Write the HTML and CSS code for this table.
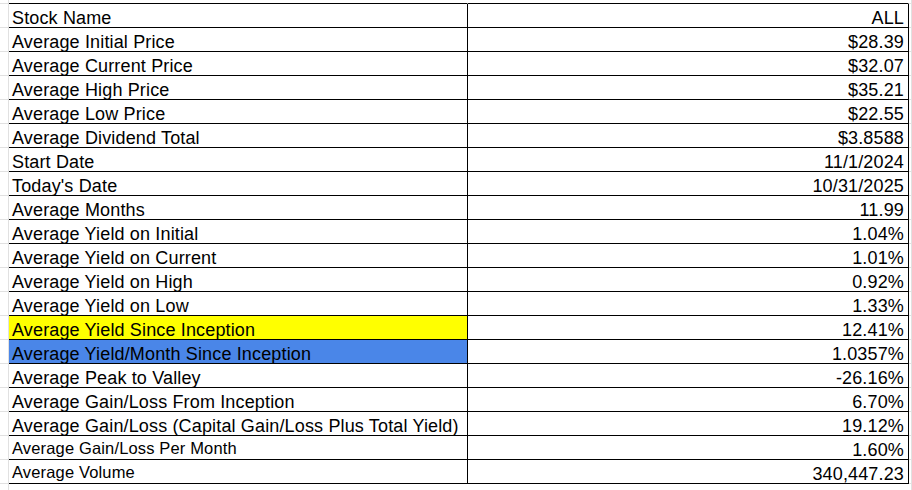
FILE: index.html
```html
<!DOCTYPE html>
<html>
<head>
<meta charset="utf-8">
<link rel="stylesheet" href="styles.css">
</head>
<body>
<div class="sheet">
  <div class="row top"><div class="gut"></div><div class="cell name"></div><div class="cell val"></div><div class="gut r"></div></div>
  <div class="row"><div class="gut"></div><div class="cell name">Stock Name</div><div class="cell val">ALL</div><div class="gut r"></div></div>
  <div class="row"><div class="gut"></div><div class="cell name">Average Initial Price</div><div class="cell val">$28.39</div><div class="gut r"></div></div>
  <div class="row"><div class="gut"></div><div class="cell name">Average Current Price</div><div class="cell val">$32.07</div><div class="gut r"></div></div>
  <div class="row"><div class="gut"></div><div class="cell name">Average High Price</div><div class="cell val">$35.21</div><div class="gut r"></div></div>
  <div class="row"><div class="gut"></div><div class="cell name">Average Low Price</div><div class="cell val">$22.55</div><div class="gut r"></div></div>
  <div class="row"><div class="gut"></div><div class="cell name">Average Dividend Total</div><div class="cell val">$3.8588</div><div class="gut r"></div></div>
  <div class="row"><div class="gut"></div><div class="cell name">Start Date</div><div class="cell val">11/1/2024</div><div class="gut r"></div></div>
  <div class="row"><div class="gut"></div><div class="cell name">Today's Date</div><div class="cell val">10/31/2025</div><div class="gut r"></div></div>
  <div class="row"><div class="gut"></div><div class="cell name">Average Months</div><div class="cell val">11.99</div><div class="gut r"></div></div>
  <div class="row"><div class="gut"></div><div class="cell name">Average Yield on Initial</div><div class="cell val">1.04%</div><div class="gut r"></div></div>
  <div class="row"><div class="gut"></div><div class="cell name">Average Yield on Current</div><div class="cell val">1.01%</div><div class="gut r"></div></div>
  <div class="row"><div class="gut"></div><div class="cell name">Average Yield on High</div><div class="cell val">0.92%</div><div class="gut r"></div></div>
  <div class="row"><div class="gut"></div><div class="cell name">Average Yield on Low</div><div class="cell val">1.33%</div><div class="gut r"></div></div>
  <div class="row"><div class="gut"></div><div class="cell name yellow">Average Yield Since Inception</div><div class="cell val">12.41%</div><div class="gut r"></div></div>
  <div class="row"><div class="gut"></div><div class="cell name blue">Average Yield/Month Since Inception</div><div class="cell val">1.0357%</div><div class="gut r"></div></div>
  <div class="row"><div class="gut"></div><div class="cell name">Average Peak to Valley</div><div class="cell val">-26.16%</div><div class="gut r"></div></div>
  <div class="row"><div class="gut"></div><div class="cell name">Average Gain/Loss From Inception</div><div class="cell val">6.70%</div><div class="gut r"></div></div>
  <div class="row"><div class="gut"></div><div class="cell name">Average Gain/Loss (Capital Gain/Loss Plus Total Yield)</div><div class="cell val">19.12%</div><div class="gut r"></div></div>
  <div class="row"><div class="gut"></div><div class="cell name small">Average Gain/Loss Per Month</div><div class="cell val">1.60%</div><div class="gut r"></div></div>
  <div class="row"><div class="gut"></div><div class="cell name small">Average Volume</div><div class="cell val">340,447.23</div><div class="gut r"></div></div>
  <div class="row tail"><div class="gut"></div><div class="blank"></div><div class="blank"></div><div class="gut r"></div></div>
</div>
</body>
</html>
```
FILE: styles.css
```css
html, body {
  margin: 0;
  padding: 0;
  background: #ffffff;
}
.sheet {
  width: 912px;
  font-family: "Liberation Sans", Arial, sans-serif;
  font-size: 18px;
  letter-spacing: 0.15px;
  color: #000000;
}
.row {
  display: grid;
  grid-template-columns: 9px 459px 441px 3px;
  height: 24px;
}
.row.top {
  height: 4px;
}
.row.top .cell {
  border-right-color: transparent;
}
.row.tail {
  height: 8px;
}
.gut {
  border-right: 1px solid #e1e1e1;
  border-bottom: 1px solid #e1e1e1;
}
.gut.r {
  border-right: 1px solid #e1e1e1;
}
.row.tail .gut {
  border-bottom: none;
}
.cell {
  border-bottom: 1px solid #000;
  border-right: 1px solid #000;
  display: flex;
  align-items: flex-end;
  line-height: 18px;
  padding-bottom: 0;
  white-space: nowrap;
  overflow: hidden;
}
.name {
  padding-left: 3px;
}
.val {
  justify-content: flex-end;
  padding-right: 4px;
}
.small {
  font-size: 16.5px;
  padding-bottom: 2px;
}
.yellow {
  background: #ffff00;
}
.blue {
  background: #4a86e8;
}
```
